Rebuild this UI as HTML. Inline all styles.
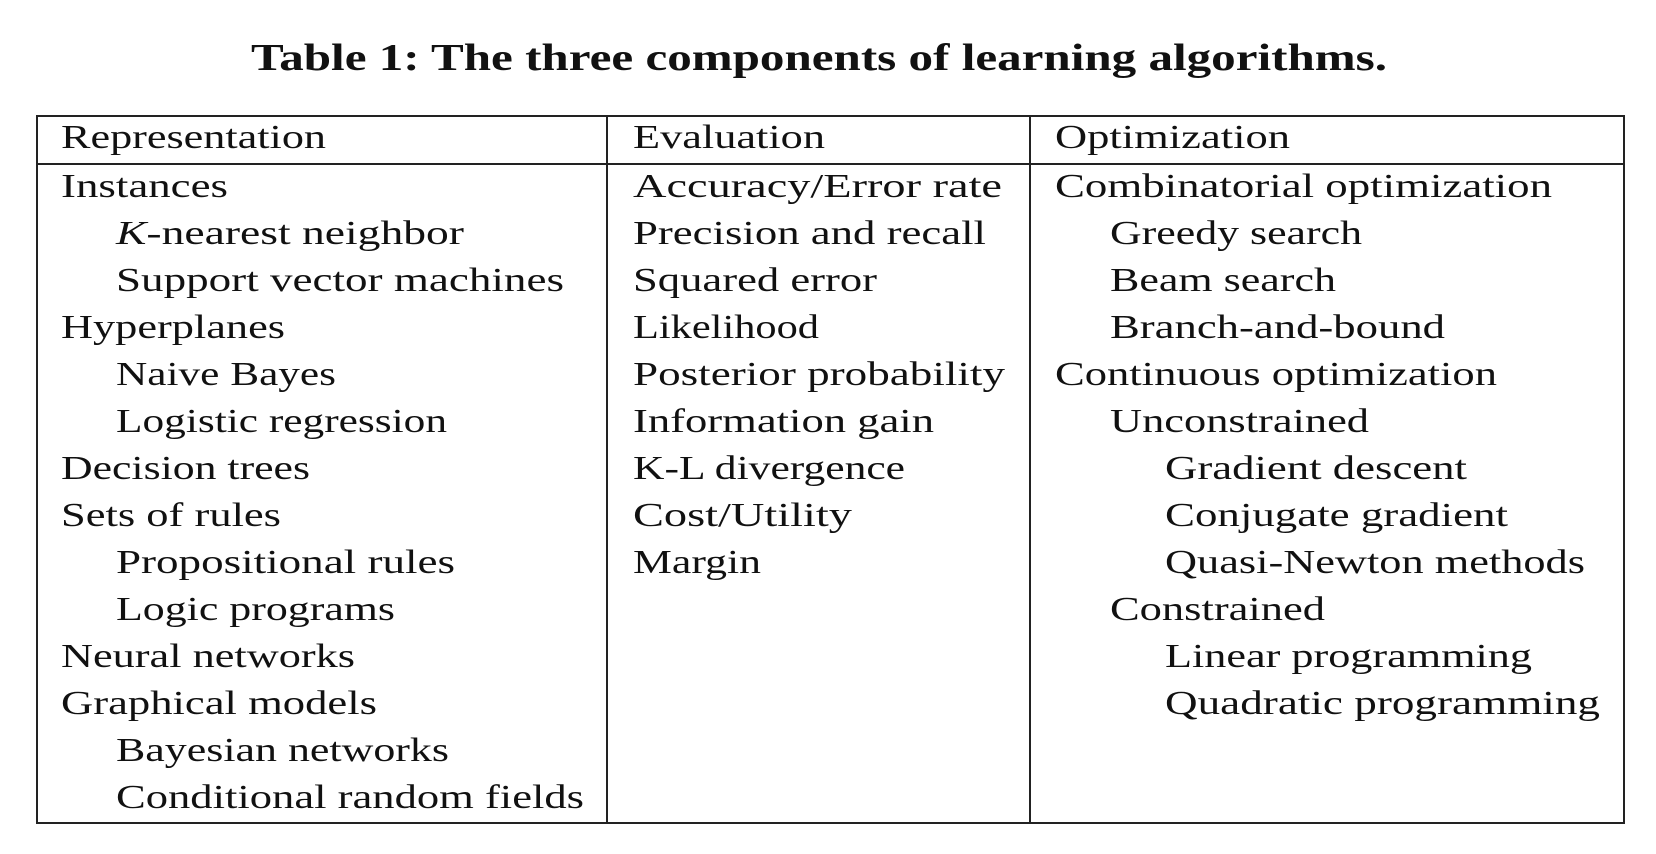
<!DOCTYPE html>
<html><head><meta charset="utf-8"><style>html,body{margin:0;padding:0;background:#fff;width:1656px;height:854px;overflow:hidden}svg{display:block}text{font-family:"Liberation Serif",serif;fill:#111}</style></head><body>
<svg width="1656" height="854" viewBox="0 0 1656 854" xmlns="http://www.w3.org/2000/svg">
<text x="251" y="70" font-size="38" font-weight="bold" textLength="1136" lengthAdjust="spacingAndGlyphs">Table 1: The three components of learning algorithms.</text>
<g stroke="#222" stroke-width="2" fill="none">
<rect x="37" y="116" width="1587" height="707"/>
<line x1="37" y1="164" x2="1624" y2="164"/>
<line x1="607" y1="116" x2="607" y2="823"/>
<line x1="1030" y1="116" x2="1030" y2="823"/>
</g>
<g font-size="34" lengthAdjust="spacingAndGlyphs">
<text x="61" y="148" textLength="265" lengthAdjust="spacingAndGlyphs">Representation</text>
<text x="633" y="148" textLength="192" lengthAdjust="spacingAndGlyphs">Evaluation</text>
<text x="1055" y="148" textLength="235" lengthAdjust="spacingAndGlyphs">Optimization</text>

<text x="61" y="197" textLength="167" lengthAdjust="spacingAndGlyphs">Instances</text>
<text x="116" y="244" textLength="348" lengthAdjust="spacingAndGlyphs"><tspan font-style="italic">K</tspan>-nearest neighbor</text>
<text x="116" y="291" textLength="448" lengthAdjust="spacingAndGlyphs">Support vector machines</text>
<text x="61" y="338" textLength="224" lengthAdjust="spacingAndGlyphs">Hyperplanes</text>
<text x="116" y="385" textLength="220" lengthAdjust="spacingAndGlyphs">Naive Bayes</text>
<text x="116" y="432" textLength="331" lengthAdjust="spacingAndGlyphs">Logistic regression</text>
<text x="61" y="479" textLength="249" lengthAdjust="spacingAndGlyphs">Decision trees</text>
<text x="61" y="526" textLength="220" lengthAdjust="spacingAndGlyphs">Sets of rules</text>
<text x="116" y="573" textLength="339" lengthAdjust="spacingAndGlyphs">Propositional rules</text>
<text x="116" y="620" textLength="279" lengthAdjust="spacingAndGlyphs">Logic programs</text>
<text x="61" y="667" textLength="294" lengthAdjust="spacingAndGlyphs">Neural networks</text>
<text x="61" y="714" textLength="316" lengthAdjust="spacingAndGlyphs">Graphical models</text>
<text x="116" y="761" textLength="333" lengthAdjust="spacingAndGlyphs">Bayesian networks</text>
<text x="116" y="808" textLength="468" lengthAdjust="spacingAndGlyphs">Conditional random fields</text>

<text x="633" y="197" textLength="369" lengthAdjust="spacingAndGlyphs">Accuracy/Error rate</text>
<text x="633" y="244" textLength="353" lengthAdjust="spacingAndGlyphs">Precision and recall</text>
<text x="633" y="291" textLength="244" lengthAdjust="spacingAndGlyphs">Squared error</text>
<text x="633" y="338" textLength="186" lengthAdjust="spacingAndGlyphs">Likelihood</text>
<text x="633" y="385" textLength="372" lengthAdjust="spacingAndGlyphs">Posterior probability</text>
<text x="633" y="432" textLength="301" lengthAdjust="spacingAndGlyphs">Information gain</text>
<text x="633" y="479" textLength="272" lengthAdjust="spacingAndGlyphs">K-L divergence</text>
<text x="633" y="526" textLength="219" lengthAdjust="spacingAndGlyphs">Cost/Utility</text>
<text x="633" y="573" textLength="128" lengthAdjust="spacingAndGlyphs">Margin</text>

<text x="1055" y="197" textLength="497" lengthAdjust="spacingAndGlyphs">Combinatorial optimization</text>
<text x="1110" y="244" textLength="252" lengthAdjust="spacingAndGlyphs">Greedy search</text>
<text x="1110" y="291" textLength="226" lengthAdjust="spacingAndGlyphs">Beam search</text>
<text x="1110" y="338" textLength="335" lengthAdjust="spacingAndGlyphs">Branch-and-bound</text>
<text x="1055" y="385" textLength="442" lengthAdjust="spacingAndGlyphs">Continuous optimization</text>
<text x="1110" y="432" textLength="259" lengthAdjust="spacingAndGlyphs">Unconstrained</text>
<text x="1165" y="479" textLength="302" lengthAdjust="spacingAndGlyphs">Gradient descent</text>
<text x="1165" y="526" textLength="343" lengthAdjust="spacingAndGlyphs">Conjugate gradient</text>
<text x="1165" y="573" textLength="420" lengthAdjust="spacingAndGlyphs">Quasi-Newton methods</text>
<text x="1110" y="620" textLength="215" lengthAdjust="spacingAndGlyphs">Constrained</text>
<text x="1165" y="667" textLength="367" lengthAdjust="spacingAndGlyphs">Linear programming</text>
<text x="1165" y="714" textLength="435" lengthAdjust="spacingAndGlyphs">Quadratic programming</text>
</g>
</svg>
</body></html>
